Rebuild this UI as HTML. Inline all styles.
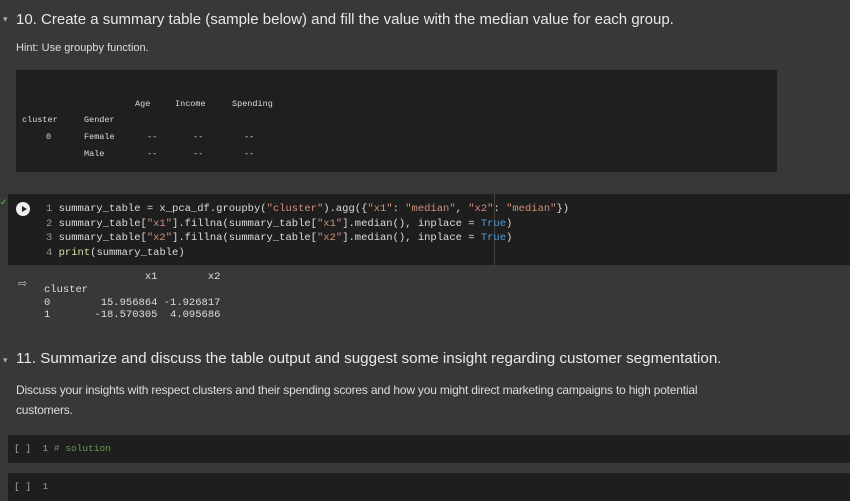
<!DOCTYPE html>
<html><head><style>
body{margin:0;width:850px;height:501px;background:#383838;font-family:"Liberation Sans",sans-serif;color:#e0e0e0;position:relative;overflow:hidden}
.a{position:absolute;white-space:pre}
.m{font-family:"Liberation Mono",monospace;font-size:10.5px}
.q{position:absolute;white-space:pre;font-family:"Liberation Mono",monospace;font-size:8.5px;color:#ddd}
.blk{position:absolute;background:#1e1e1e}
.s{color:#ce9178}.t{color:#569cd6}.p{color:#dcdcaa}.c{color:#6a9955}.n{color:#999}
</style></head><body>
<div class="a" style="left:3px;top:14px;font-size:9px;color:#aaa">▾</div>
<div class="a" style="left:16px;top:11px;font-size:15px;color:#e8e8e8">10. Create a summary table (sample below) and fill the value with the median value for each group.</div>
<div class="a" style="left:16px;top:42px;font-size:11px;color:#ddd">Hint: Use groupby function.</div>
<div class="blk" style="left:16px;top:70px;width:761px;height:102px;background:#1f1f1f"></div>
<div class="q" style="left:135px;top:99px">Age</div>
<div class="q" style="left:175px;top:99px">Income</div>
<div class="q" style="left:232px;top:99px">Spending</div>
<div class="q" style="left:22px;top:115px">cluster</div>
<div class="q" style="left:84px;top:115px">Gender</div>
<div class="q" style="left:46px;top:132px">0</div>
<div class="q" style="left:84px;top:132px">Female</div>
<div class="q" style="left:84px;top:149px">Male</div>
<div class="q" style="left:147px;top:132px">--</div><div class="q" style="left:193px;top:132px">--</div><div class="q" style="left:244px;top:132px">--</div>
<div class="q" style="left:147px;top:149px">--</div><div class="q" style="left:193px;top:149px">--</div><div class="q" style="left:244px;top:149px">--</div>
<div class="blk" style="left:8px;top:194px;width:842px;height:71px;background:#1e1e1e"></div>
<div class="a" style="left:0;top:197px;font-size:9px;color:#5c5">✓</div>
<div style="position:absolute;left:16px;top:202px;width:14px;height:14px;border-radius:50%;background:#eee"></div>
<div style="position:absolute;left:22px;top:206px;width:0;height:0;border-left:5px solid #222;border-top:3px solid transparent;border-bottom:3px solid transparent"></div>
<div style="position:absolute;left:494px;top:194px;width:1px;height:71px;background:#444"></div>
<div class="a m" style="left:46px;top:202px;line-height:14.5px;color:#ddd"><span class="n">1</span> summary_table = x_pca_df.groupby(<span class="s">"cluster"</span>).agg({<span class="s">"x1"</span>: <span class="s">"median"</span>, <span class="s">"x2"</span>: <span class="s">"median"</span>})
<span class="n">2</span> summary_table[<span class="s">"x1"</span>].fillna(summary_table[<span class="s">"x1"</span>].median(), inplace = <span class="t">True</span>)
<span class="n">3</span> summary_table[<span class="s">"x2"</span>].fillna(summary_table[<span class="s">"x2"</span>].median(), inplace = <span class="t">True</span>)
<span class="n">4</span> <span class="p">print</span>(summary_table)</div>
<div class="a" style="left:18px;top:277px;font-size:11px;color:#bbb">⇨</div>
<div class="a m" style="left:44px;top:271px;line-height:12.8px;color:#ddd;font-size:10.5px">                x1        x2
cluster
0        15.956864 -1.926817
1       -18.570305  4.095686</div>
<div class="a" style="left:3px;top:355px;font-size:9px;color:#aaa">▾</div>
<div class="a" style="left:16px;top:350px;font-size:15.2px;color:#e8e8e8">11. Summarize and discuss the table output and suggest some insight regarding customer segmentation.</div>
<div class="a" style="left:16px;top:380px;font-size:12px;color:#ddd;line-height:20px;letter-spacing:-0.2px">Discuss your insights with respect clusters and their spending scores and how you might direct marketing campaigns to high potential
customers.</div>
<div class="blk" style="left:8px;top:435px;width:842px;height:28px"></div>
<div class="a m" style="left:14px;top:443px;color:#aaa;font-size:9.5px">[ ]  <span class="n">1</span> <span class="c"># solution</span></div>
<div class="blk" style="left:8px;top:473px;width:842px;height:28px"></div>
<div class="a m" style="left:14px;top:481px;color:#aaa;font-size:9.5px">[ ]  <span class="n">1</span></div>
</body></html>
